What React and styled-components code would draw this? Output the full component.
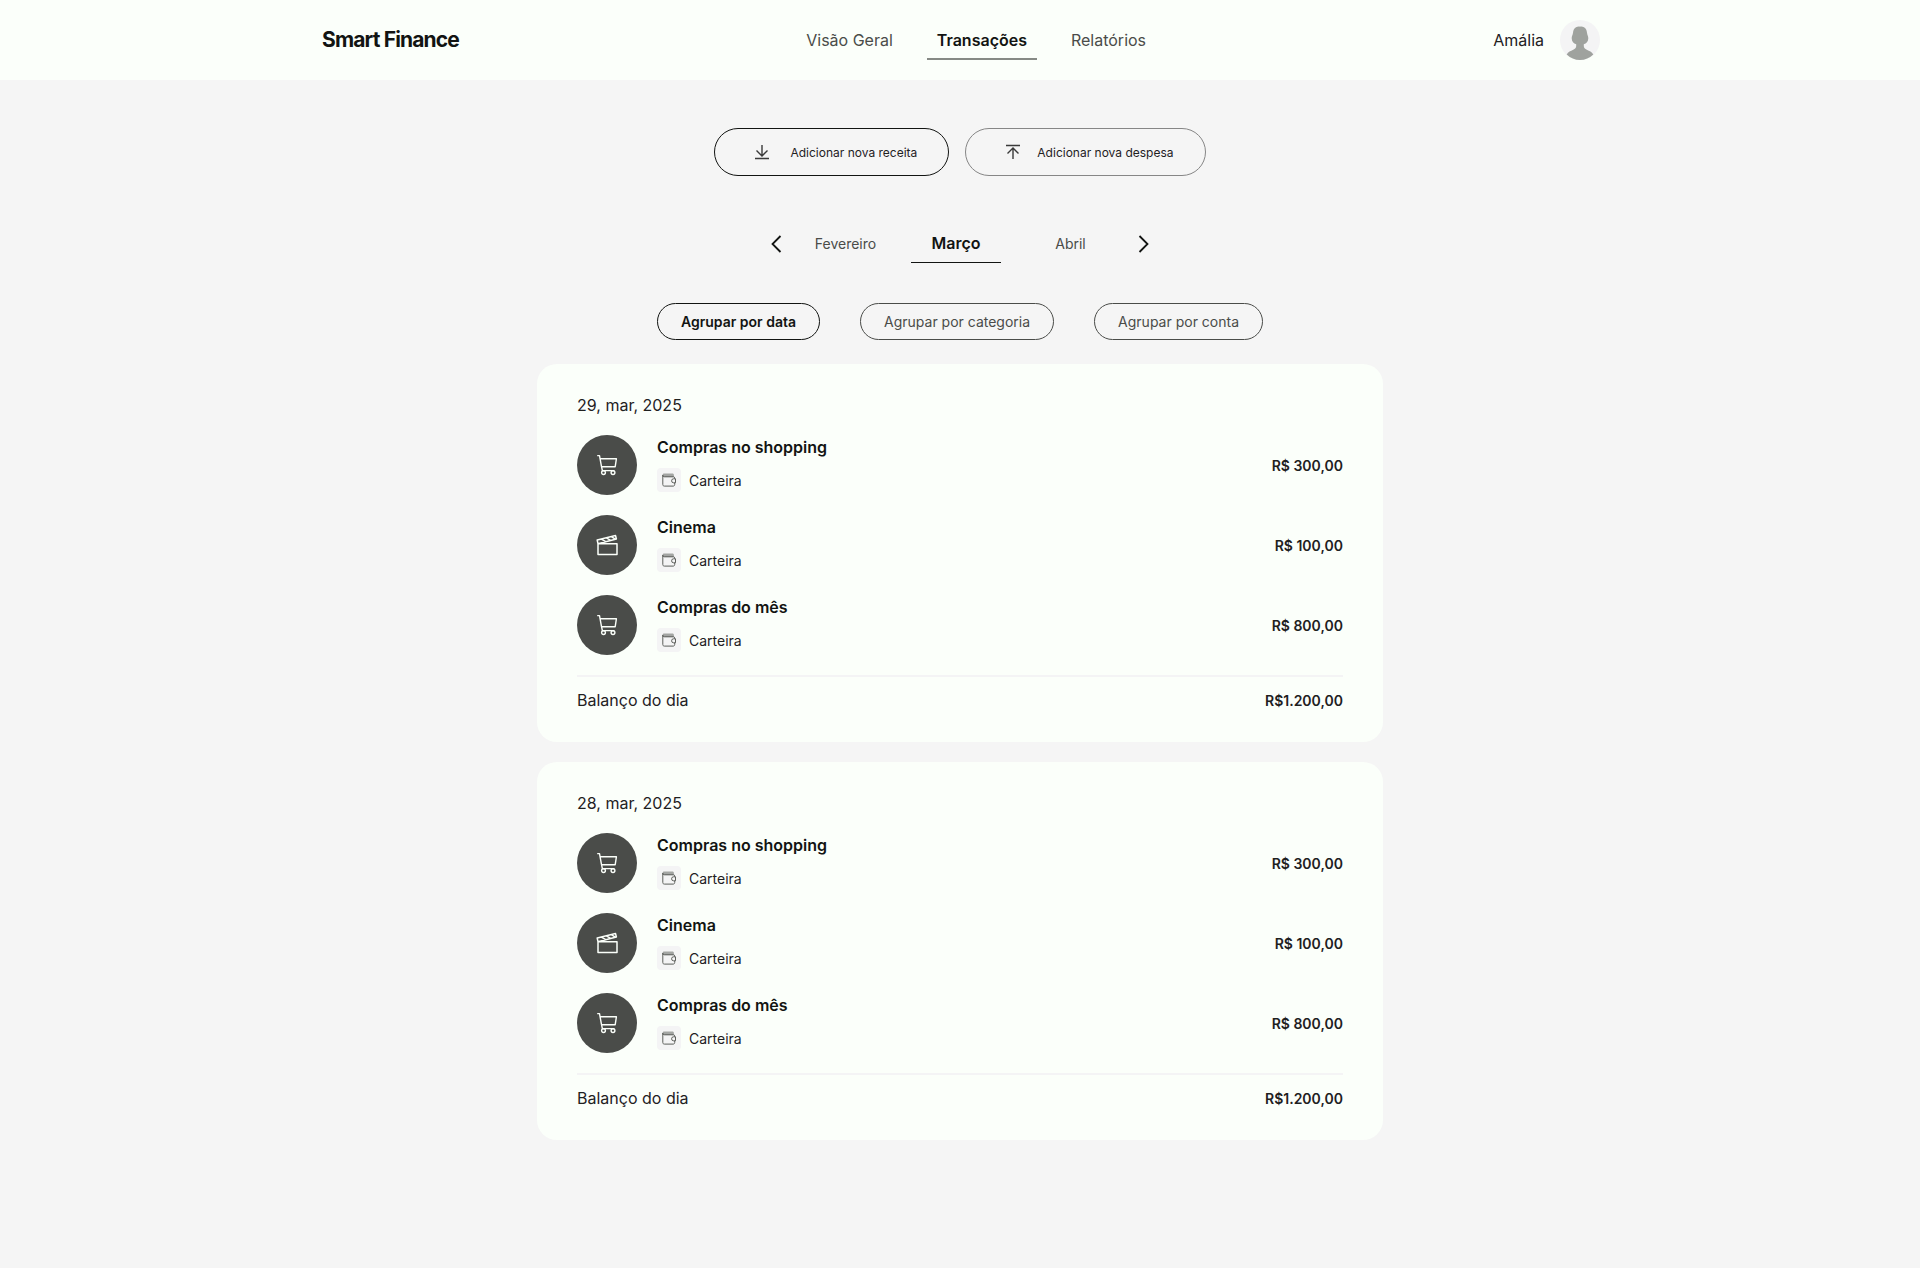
import React, { useState } from "react";
import styled, { createGlobalStyle, ThemeProvider } from "styled-components";

const theme = {
  page: "#f5f5f5",
  surface: "#fbfffa",
  ink: "#121412",
  text: "#1f211f",
  muted: "#4a4c49",
  line: "#f4f4f5",
};

const GlobalStyle = createGlobalStyle`
  *, *::before, *::after { box-sizing: border-box; }
  body {
    margin: 0;
    background: ${theme.page};
    color: ${theme.text};
    font-family: Inter, "Liberation Sans", sans-serif;
    font-size: 16px;
    line-height: 19px;
  }
  button { font: inherit; color: inherit; background: none; border: 0; padding: 0; cursor: pointer; }
  a { color: inherit; text-decoration: none; }
  h1, h2, h3, p, ul { margin: 0; padding: 0; font-size: inherit; }
  ul { list-style: none; }
  svg { display: block; flex: none; }
`;

const Header = styled.header`
  background: ${(p) => p.theme.surface};
`;

const HeaderInner = styled.div`
  display: flex;
  align-items: center;
  justify-content: space-between;
  max-width: 1280px;
  height: 80px;
  margin: 0 auto;
`;

const Logo = styled.h1`
  && {
    padding-left: 2px;
    font-size: 21px;
  }
  line-height: 24px;
  font-weight: 700;
  letter-spacing: -0.04em;
  color: ${(p) => p.theme.ink};
`;

const Nav = styled.nav`
  display: flex;
  gap: 24px;
`;

const NavLink = styled.a`
  padding: 10px 10px 8px;
  border-bottom: 2px solid ${(p) => (p.$active ? "#868a85" : "transparent")};
  font-weight: ${(p) => (p.$active ? 600 : 400)};
  color: ${(p) => (p.$active ? p.theme.ink : p.theme.muted)};
`;

const User = styled.div`
  display: flex;
  align-items: center;
  gap: 16px;
`;

const Main = styled.main`
  display: flex;
  flex-direction: column;
  align-items: center;
  padding: 48px 20px 128px;
`;

const Actions = styled.div`
  display: flex;
  flex-wrap: wrap;
  gap: 16px;
`;

const ActionButton = styled.button`
  display: flex;
  align-items: center;
  gap: ${(p) => (p.$primary ? 12 : 8)}px;
  height: 48px;
  && {
    padding: 0 31px;
    border: 1px solid ${(p) => (p.$primary ? p.theme.ink : "#868686")};
    border-radius: 24px;
    font-size: 12px;
  }
`;

const MonthPicker = styled.div`
  display: flex;
  align-items: center;
  gap: 12px;
  margin-top: 48px;
`;

const ArrowButton = styled.button`
  width: 24px;
  height: 24px;
`;

const Months = styled.div`
  display: grid;
  grid-template-columns: 91px 90px 99px;
  gap: 20px;
`;

const Month = styled.button`
  && {
    padding: 10px 0 9px;
    border-bottom: 1px solid ${(p) => (p.$active ? p.theme.ink : "transparent")};
    font-size: ${(p) => (p.$active ? 16 : 14)}px;
    font-weight: ${(p) => (p.$active ? 600 : 400)};
    color: ${(p) => (p.$active ? p.theme.ink : p.theme.muted)};
  }
`;

const Groups = styled.div`
  display: flex;
  flex-wrap: wrap;
  gap: 40px;
  margin: 40px 0 24px;
`;

const GroupButton = styled.button`
  && {
    padding: 8px 23px;
    border: 1px solid ${(p) => (p.$active ? p.theme.ink : p.theme.muted)};
    border-radius: 20px;
    font-size: 14px;
    font-weight: ${(p) => (p.$active ? 600 : 400)};
    color: ${(p) => (p.$active ? p.theme.ink : p.theme.muted)};
  }
`;

const Days = styled.div`
  display: flex;
  flex-direction: column;
  gap: 20px;
  width: 100%;
  max-width: 846px;
`;

const Card = styled.section`
  padding: 32px 40px;
  border-radius: 20px;
  background: ${(p) => p.theme.surface};
`;

const DayTitle = styled.h2`
  font-weight: 400;
`;

const Transactions = styled.ul`
  && {
    display: flex;
    flex-direction: column;
    gap: 20px;
    padding: 20px 0;
  }
`;

const Transaction = styled.li`
  display: flex;
  align-items: center;
  gap: 20px;
`;

const Badge = styled.div`
  display: grid;
  place-items: center;
  width: 60px;
  height: 60px;
  border-radius: 50%;
  background: ${(p) => p.theme.muted};
  color: ${(p) => p.theme.surface};
`;

const Details = styled.div`
  display: flex;
  flex: 1;
  flex-direction: column;
  gap: 11px;
`;

const Name = styled.h3`
  font-weight: 600;
  color: ${(p) => p.theme.ink};
`;

const Account = styled.p`
  display: flex;
  align-items: center;
  gap: 8px;
  && { font-size: 14px; }
`;

const AccountIcon = styled.span`
  display: grid;
  place-items: center;
  width: 24px;
  height: 24px;
  border-radius: 4px;
  background: ${(p) => p.theme.line};
`;

const Amount = styled.span`
  font-size: 14px;
  font-weight: 600;
  color: ${(p) => p.theme.text};
`;

const Balance = styled.div`
  display: flex;
  align-items: center;
  justify-content: space-between;
  padding-top: 14px;
  border-top: 2px solid ${(p) => p.theme.line};
`;

const Avatar = () => (
  <svg width="40" height="40" viewBox="0 0 40 40" role="img" aria-label="Foto de Amália">
    <circle cx="20" cy="20" r="20" fill="#f4f4f5" />
    <path
      d="M20 6.8c1-.5 2.6-.2 4 .5 2 1 2.700 3 3 5.500.2 2 1.300 3.200 1.300 5.400 0 3.200-2 5.400-4.500 6v1.800c0 1.600 1.200 2.900 3 3.700 2.600 1.200 5 2.200 6.500 4.700A20 20 0 0 1 20 40a20 20 0 0 1-13.300-5.600c1.500-2.500 3.900-3.500 6.500-4.700 1.800-.8 3-2.100 3-3.700v-1.800c-2.500-.6-4.500-2.800-4.500-6 0-2.200 1.100-3.400 1.300-5.400.3-2.500 1-4.500 3-5.500 1.400-.7 3-1 4-.5z"
      fill="#9fa29e"
    />
  </svg>
);

const IncomeIcon = () => (
  <svg width="32" height="32" viewBox="0 0 32 32" fill="none" stroke="#3a3a3a" strokeWidth="1.4" aria-hidden="true">
    <path d="M16 9v11M10.500 14.500l5.500 5.500 5.500-5.500M9 22.500h14" />
  </svg>
);

const ExpenseIcon = () => (
  <svg width="32" height="32" viewBox="0 0 32 32" fill="none" stroke="#3a3a3a" strokeWidth="1.4" aria-hidden="true">
    <path d="M16 23V12M10.500 17.500l5.500-5.500 5.500 5.500M9 9.500h14" />
  </svg>
);

const Chevron = ({ d }) => (
  <svg width="24" height="24" viewBox="0 0 24 24" fill="none" stroke="#121412" strokeWidth="1.800" aria-hidden="true">
    <path d={d} />
  </svg>
);

const CartIcon = () => (
  <svg width="22" height="22" viewBox="0 0 22 22" fill="none" stroke="currentColor" strokeWidth="1.400" strokeLinejoin="round" aria-hidden="true">
    <path d="M1.200 1.600h2.300l.6 3.200h16.300l-1.200 7.900H5.500L4.100 4.800M5.500 12.700l.9 3.900h12" />
    <circle cx="7.500" cy="18.600" r="1.900" />
    <circle cx="17" cy="18.600" r="1.900" />
  </svg>
);

const ClapperIcon = () => (
  <svg width="22" height="22" viewBox="0 0 22 22" fill="none" stroke="currentColor" strokeWidth="1.500" strokeLinejoin="round" aria-hidden="true">
    <path d="M2 9.800h19v10.600H2zM2 9.800L1.200 6.100l18.300-4.600.9 3.500L2 9.800M5.500 5.200l4.200 2.500M10.400 3.900l4.200 2.500M15.300 2.700l4 2.400" />
  </svg>
);

const WalletIcon = () => (
  <svg width="14" height="14" viewBox="0 0 14 14" fill="none" aria-hidden="true">
    <path d="M.5 2C.5 1 1.200.4 2.200.4h8.200c.9 0 1.500.6 1.500 1.500v2H.5z" fill="#a3a5a3" />
    <path d="M.8 2v9.500c0 1 .6 1.600 1.600 1.600h8.700c1 0 1.600-.6 1.600-1.600V9.800M12.700 5.800v-.7c0-.8-.5-1.300-1.300-1.300H2.400C1.400 3.800.8 3 .8 2.200" stroke="#5c5e5b" strokeWidth="1" />
    <path d="M13.500 5.800h-1.900a2 2 0 0 0 0 4h1.900z" stroke="#5c5e5b" strokeWidth="1" />
  </svg>
);

const icons = { cart: CartIcon, clapper: ClapperIcon };

const entries = [
  { name: "Compras no shopping", account: "Carteira", amount: "R$ 300,00", icon: "cart" },
  { name: "Cinema", account: "Carteira", amount: "R$ 100,00", icon: "clapper" },
  { name: "Compras do mês", account: "Carteira", amount: "R$ 800,00", icon: "cart" },
];

const days = [
  { date: "29, mar, 2025", balance: "R$1.200,00", entries },
  { date: "28, mar, 2025", balance: "R$1.200,00", entries },
];

const pages = ["Visão Geral", "Transações", "Relatórios"];
const months = ["Fevereiro", "Março", "Abril"];
const groupings = ["Agrupar por data", "Agrupar por categoria", "Agrupar por conta"];

function DayCard({ day }) {
  return (
    <Card>
      <DayTitle>{day.date}</DayTitle>
      <Transactions>
        {day.entries.map((entry) => {
          const Icon = icons[entry.icon];
          return (
            <Transaction key={entry.name}>
              <Badge><Icon /></Badge>
              <Details>
                <Name>{entry.name}</Name>
                <Account>
                  <AccountIcon><WalletIcon /></AccountIcon>
                  {entry.account}
                </Account>
              </Details>
              <Amount>{entry.amount}</Amount>
            </Transaction>
          );
        })}
      </Transactions>
      <Balance>
        <span>Balanço do dia</span>
        <Amount>{day.balance}</Amount>
      </Balance>
    </Card>
  );
}

export default function App() {
  const [month, setMonth] = useState(1);
  const [grouping, setGrouping] = useState(0);

  return (
    <ThemeProvider theme={theme}>
      <GlobalStyle />
      <Header>
        <HeaderInner>
          <Logo>Smart Finance</Logo>
          <Nav>
            {pages.map((page) => (
              <NavLink key={page} href="#" $active={page === "Transações"} aria-current={page === "Transações" ? "page" : undefined}>
                {page}
              </NavLink>
            ))}
          </Nav>
          <User>
            <span>Amália</span>
            <Avatar />
          </User>
        </HeaderInner>
      </Header>
      <Main>
        <Actions>
          <ActionButton type="button" $primary><IncomeIcon />Adicionar nova receita</ActionButton>
          <ActionButton type="button"><ExpenseIcon />Adicionar nova despesa</ActionButton>
        </Actions>
        <MonthPicker>
          <ArrowButton type="button" aria-label="Mês anterior" onClick={() => setMonth(Math.max(0, month - 1))}>
            <Chevron d="M16.500 4l-8 8 8 8" />
          </ArrowButton>
          <Months>
            {months.map((name, i) => (
              <Month key={name} type="button" $active={i === month} onClick={() => setMonth(i)}>{name}</Month>
            ))}
          </Months>
          <ArrowButton type="button" aria-label="Próximo mês" onClick={() => setMonth(Math.min(2, month + 1))}>
            <Chevron d="M7.500 4l8 8-8 8" />
          </ArrowButton>
        </MonthPicker>
        <Groups>
          {groupings.map((label, i) => (
            <GroupButton key={label} type="button" $active={i === grouping} aria-pressed={i === grouping} onClick={() => setGrouping(i)}>
              {label}
            </GroupButton>
          ))}
        </Groups>
        <Days>
          {days.map((day) => <DayCard key={day.date} day={day} />)}
        </Days>
      </Main>
    </ThemeProvider>
  );
}
